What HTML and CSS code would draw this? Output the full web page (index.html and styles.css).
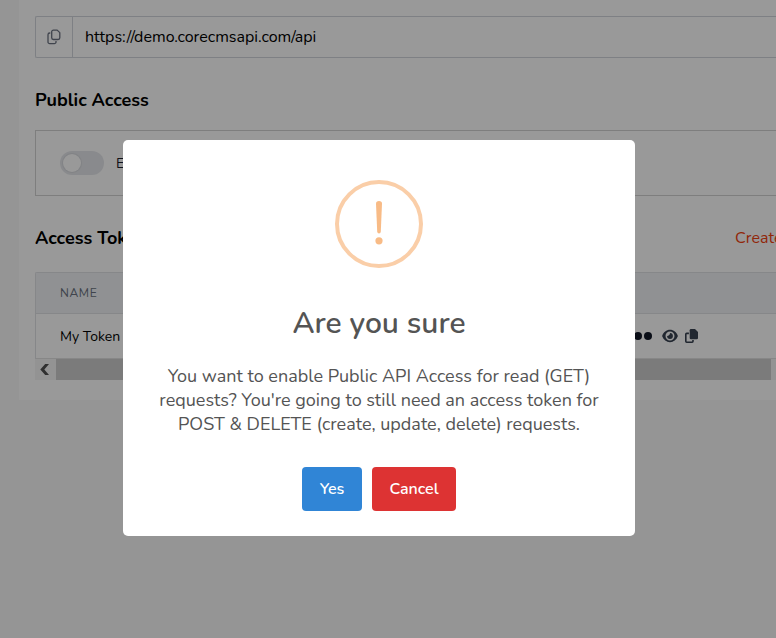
FILE: index.html
```html
<!DOCTYPE html>
<html lang="en">
<head>
<meta charset="utf-8">
<title>API Access</title>
<link rel="stylesheet" href="styles.css">
</head>
<body>
<main class="panel">
  <div class="endpoint">
    <button class="endpoint-copy" aria-label="Copy">
      <svg width="14" height="16" viewBox="0 0 14 16" fill="none" stroke="currentColor" stroke-width="1.3" stroke-linejoin="round"><path d="M6.4 1.1h3.8l2.6 2.5v5.2a1.7 1.7 0 0 1-1.7 1.700H6.400a1.700 1.700 0 0 1-1.700-1.700v-6a1.700 1.700 0 0 1 1.700-1.700Z"/><path d="M3.300 4H2.700A1.700 1.700 0 0 0 1 5.700v7.200a1.700 1.700 0 0 0 1.700 1.700h4.600A1.700 1.700 0 0 0 9 12.900v-.8"/></svg>
    </button>
    <span class="endpoint-url">https://demo.corecmsapi.com/api</span>
  </div>
  <h2 class="heading heading-public">Public Access</h2>
  <div class="setting">
    <span class="toggle"></span>
    <span class="setting-label">Enable Public API Access</span>
  </div>
  <div class="section-head">
    <h2 class="heading heading-tokens">Access Tokens</h2>
    <a class="create">Create</a>
  </div>
  <div class="table">
    <div class="row row-head">NAME</div>
    <div class="row row-body">
      <span class="token-name">My Token</span>
      <span class="token-value"><i class="dot"></i><i class="dot"></i><i class="dot"></i></span>
      <svg class="eye" width="16" height="14" viewBox="0 0 16 14"><path fill="currentColor" fill-rule="evenodd" d="M8 .8C4.300.8 1.500 3.400.3 6.400a1.400 1.400 0 0 0 0 1.200C1.500 10.600 4.300 13.200 8 13.200s6.500-2.600 7.700-5.600a1.400 1.400 0 0 0 0-1.200C14.500 3.400 11.700.8 8 .8Zm0 1.700a4.500 4.500 0 1 1 0 9 4.500 4.500 0 0 1 0-9Z"/><path fill="currentColor" d="M8 4.100c0 1.700-1.200 2.900-2.900 2.900A2.900 2.900 0 1 0 8 4.100Z"/></svg>
      <svg class="copy" width="13" height="14" viewBox="0 0 13 14"><path fill="currentColor" d="M6 0h4l3 3v6a1.300 1.300 0 0 1-1.300 1.300H6A1.300 1.300 0 0 1 4.700 9V1.300A1.300 1.300 0 0 1 6 0Z"/><path fill="none" stroke="currentColor" stroke-width="1.600" d="M3.900 4.400H1.700A.9.9 0 0 0 .8 5.300v7a.9.9 0 0 0 .9.9h5.400a.9.9 0 0 0 .9-.9v-1.200"/></svg>
    </div>
  </div>
  <div class="scrollbar">
    <span class="scroll-arrow"><svg width="9" height="11" viewBox="0 0 9 11" fill="currentColor"><path d="M5.200 0H9L4.300 5.500 9 11H5.200L.3 5.500Z"/></svg></span>
    <span class="scroll-thumb"></span>
  </div>
</main>
<div class="overlay">
  <section class="dialog" role="dialog">
    <div class="warning">
      <svg width="12" height="44" viewBox="0 0 12 44" fill="#f8bb86"><path d="M3 2.500Q3 0 6 0t3 2.500L7.800 30.500Q7.700 32.400 6 32.400T4.200 30.500Z"/><circle cx="6" cy="39.800" r="3.600"/></svg>
    </div>
    <h1 class="title">Are you sure</h1>
    <p class="message">You want to enable Public API Access for read (GET)<br>requests? You're going to still need an access token for<br>POST &amp; DELETE (create, update, delete) requests.</p>
    <div class="actions">
      <button class="button yes">Yes</button>
      <button class="button cancel">Cancel</button>
    </div>
  </section>
</div>
</body>
</html>
```
FILE: styles.css
```css
* { box-sizing: border-box; }
body {
  margin: 0;
  height: 638px;
  overflow: hidden;
  background: #f9f9f9;
  color: #000;
  font: 16px/24px Nunito, Lato, sans-serif;
}
button { border: 0; padding: 0; font: inherit; }
.panel {
  height: 400px;
  margin-left: 19px;
  padding: 16px 0 0 16px;
  overflow: hidden;
  background: #fff;
}
.endpoint {
  display: flex;
  height: 42px;
  border: 1px solid #d2d6dc;
  border-right: 0;
  border-radius: 2px 0 0 2px;
}
.endpoint-copy {
  display: flex;
  align-items: center;
  justify-content: center;
  width: 37px;
  border-right: 1px solid #d2d6dc;
  background: none;
  color: #6b7280;
}
.endpoint-url { padding: 8px 12px; }
.heading { margin: 0; font-size: 18px; line-height: 24px; font-weight: 700; }
.heading-public { margin-top: 30px; }
.setting {
  display: flex;
  align-items: center;
  gap: 12px;
  height: 66px;
  margin-top: 18px;
  padding-left: 24px;
  border: 1px solid #d2d2d2;
  border-right: 0;
}
.toggle {
  width: 44px;
  height: 24px;
  padding: 3px;
  border-radius: 12px;
  background: #e5e7eb;
}
.toggle::before {
  content: "";
  display: block;
  width: 18px;
  height: 18px;
  border-radius: 50%;
  background: #fff;
  box-shadow: 0 0 1px 1px #d6d8dd;
}
.setting-label { padding-top: 1px; color: #1a202c; font-size: 14px; }
.section-head { display: flex; margin-top: 30px; }
.heading-tokens { width: 700px; flex: none; }
.create { flex: none; color: #f2420f; }
.table { margin-top: 22px; border: 1px solid #dfe1e5; border-width: 1px 0 0 1px; border-radius: 2px 0 0 0; }
.row { display: flex; align-items: center; padding-left: 24px; }
.row-head {
  height: 41px;
  border-bottom: 1px solid #dfe1e5;
  background: #f0f2f5;
  color: #6b7280;
  font-size: 12px;
  letter-spacing: 0.6px;
}
.row-body { height: 45px; border-bottom: 1px solid #e2e2e2; font-size: 14px; }
.token-name { width: 564px; padding-top: 1px; }
.token-value { display: flex; gap: 2px; width: 38px; color: #111827; }
.dot { width: 8px; height: 8px; border-radius: 50%; background: currentColor; }
.eye { color: #374151; }
.copy { margin-left: 7px; color: #374151; }
.scrollbar { display: flex; height: 21px; background: #f5f5f5; }
.scroll-arrow { display: flex; align-items: center; justify-content: center; width: 21px; padding-right: 2px; color: #505050; }
.scroll-thumb { width: 715px; background: #cdcdcd; }
.overlay {
  position: absolute;
  inset: 0;
  background: rgba(0, 0, 0, 0.4);
  padding: 140px 0 0 123px;
}
.dialog {
  display: flex;
  flex-direction: column;
  align-items: center;
  width: 512px;
  height: 396px;
  padding-top: 40px;
  border-radius: 5px;
  background: #fff;
  color: #545454;
}
.warning {
  display: flex;
  align-items: center;
  justify-content: center;
  width: 88px;
  height: 88px;
  padding-bottom: 2px;
  border: 4px solid #facea8;
  border-radius: 50%;
}
.title { margin: 36px 0 0; font-size: 30px; line-height: 40px; font-weight: 600; }
.message { margin: 20px 0 0; text-align: center; font-size: 18px; line-height: 24px; white-space: nowrap; }
.actions { display: flex; gap: 10px; margin-top: 31px; }
.button { height: 44px; border-radius: 4px; color: #fff; font-size: 16px; font-weight: 600; }
.yes { width: 60px; background: #3085d6; }
.cancel { width: 84px; background: #dd3333; }
```
